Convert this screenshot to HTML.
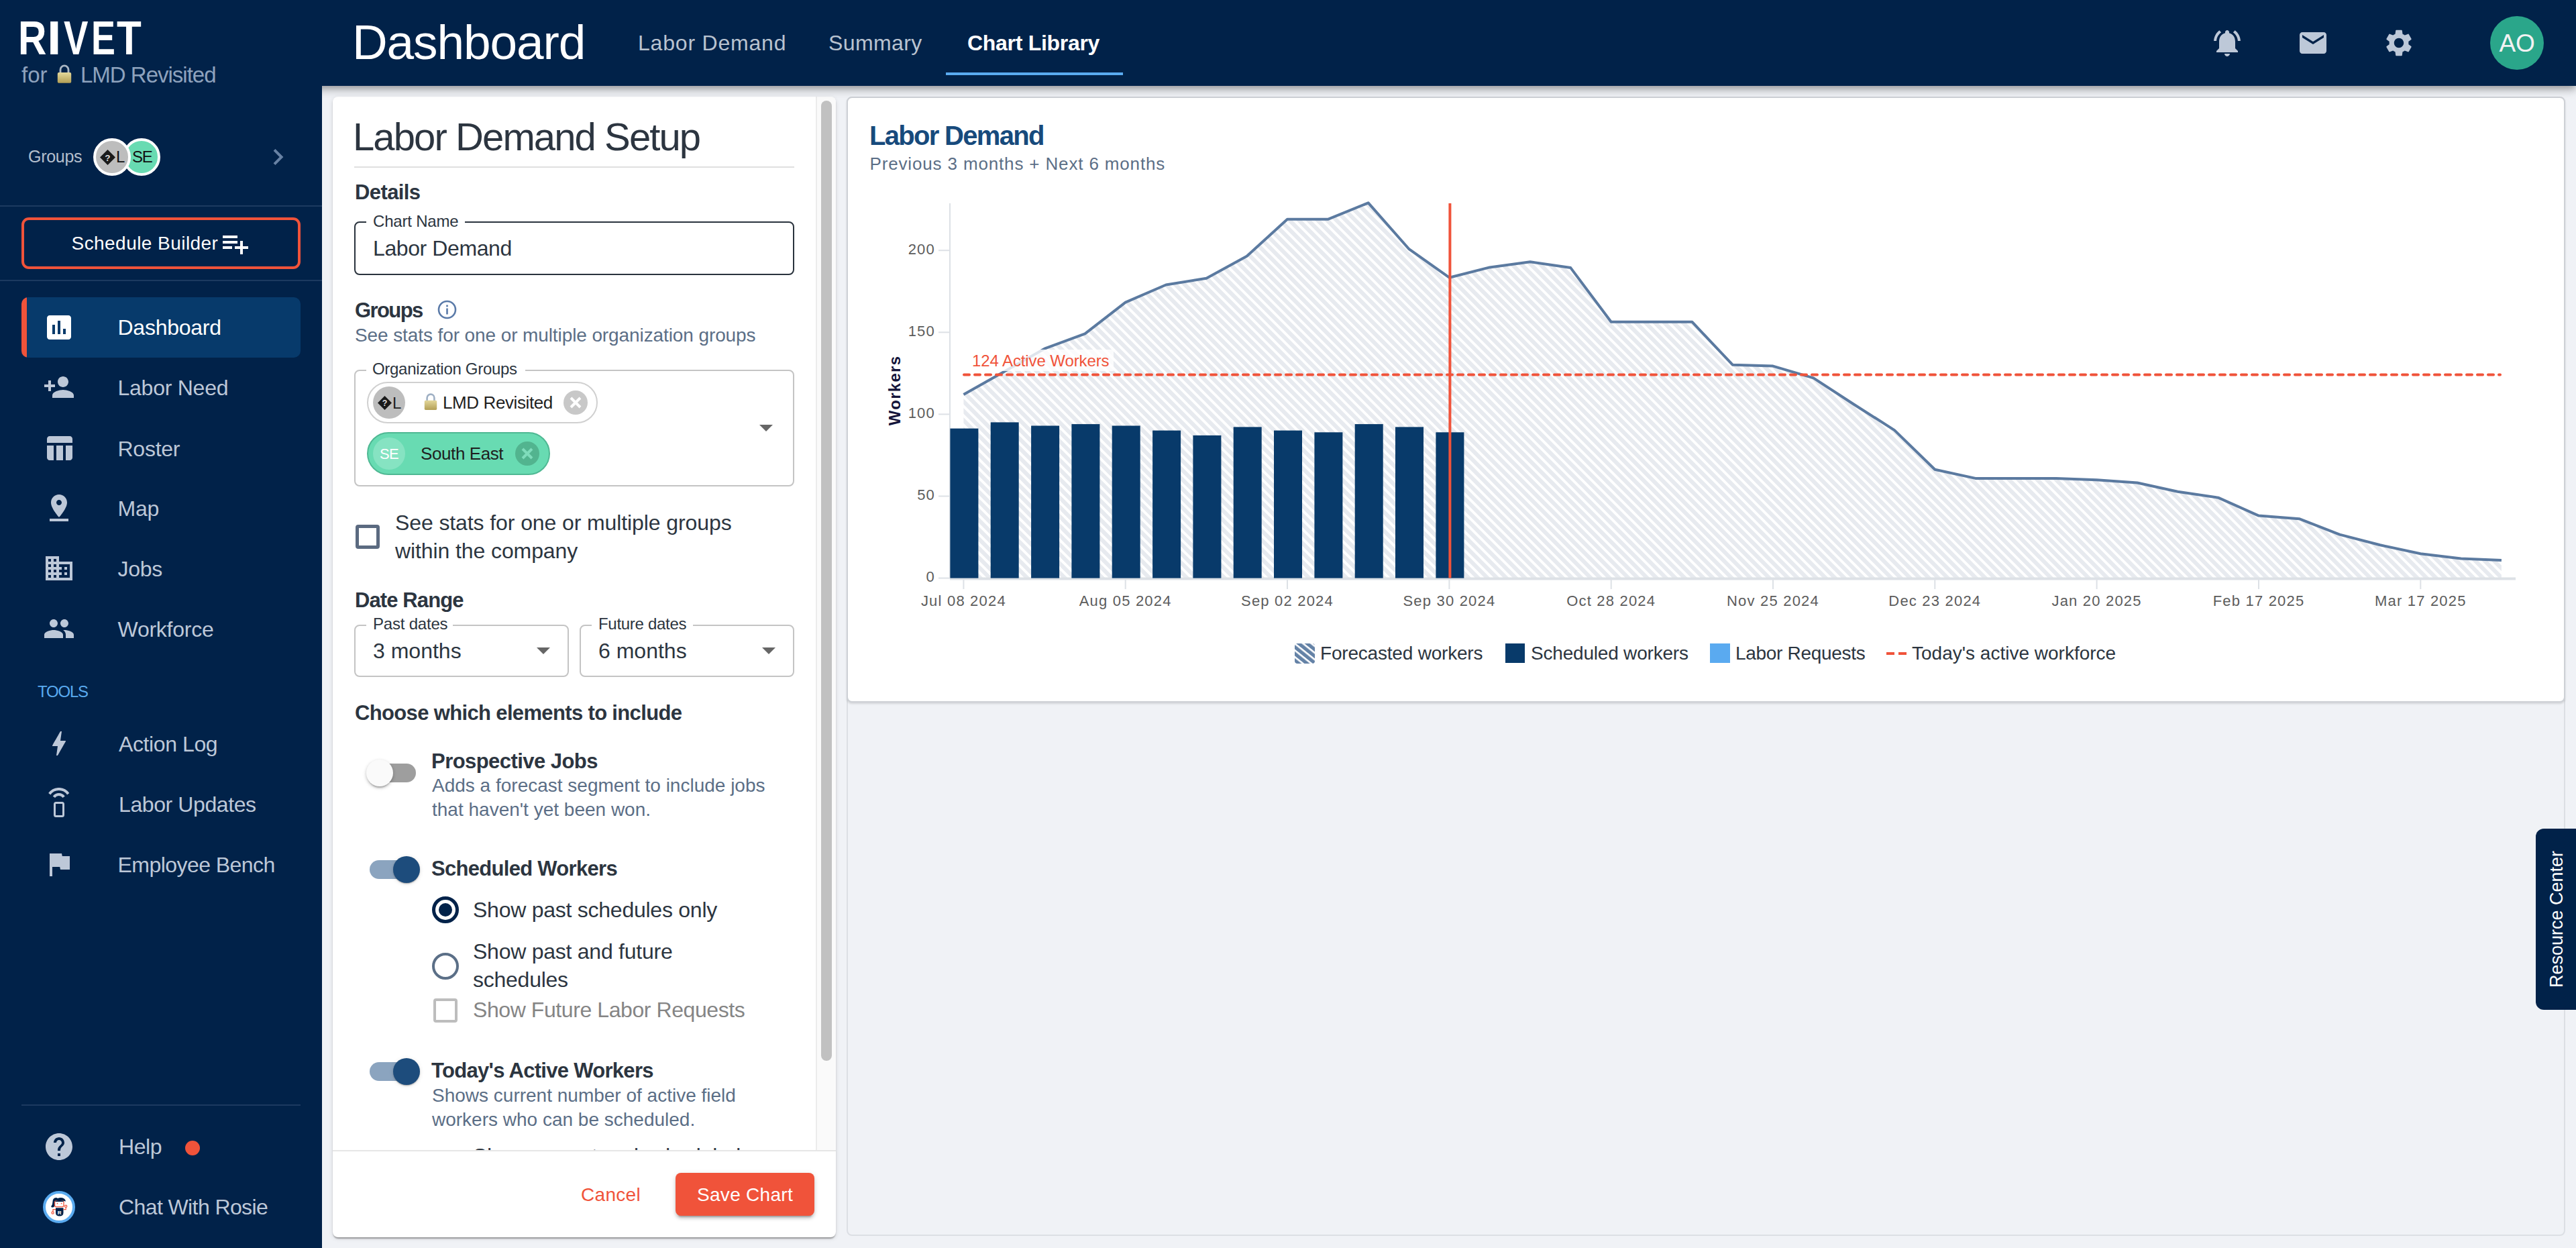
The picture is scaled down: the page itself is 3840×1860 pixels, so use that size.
<!DOCTYPE html>
<html><head><meta charset="utf-8"><title>Dashboard</title>
<style>
html,body{margin:0;padding:0;width:3840px;height:1860px;overflow:hidden;background:#f0f2f6;font-family:"Liberation Sans",sans-serif;}
.t{position:absolute;white-space:nowrap;line-height:1;}
svg{display:block}
</style></head><body>
<div style="position:relative;width:3840px;height:1860px;overflow:hidden">
<div style="position:absolute;left:0;top:0;width:480px;height:1860px;z-index:10">
<div style="position:absolute;left:0.0px;top:0.0px;width:480.0px;height:1860.0px;background:#012249"></div>
<div class="t rv" style="left:27.0px;top:21.7px;font-size:70px;color:#ffffff;font-weight:700;transform-origin:0 0;transform:scaleX(0.84);">R</div>
<div class="t rv" style="left:69.5px;top:21.7px;font-size:70px;color:#ffffff;font-weight:700;transform-origin:0 0;transform:scaleX(1.1);">I</div>
<div class="t rv" style="left:94.5px;top:21.7px;font-size:70px;color:#ffffff;font-weight:700;transform-origin:0 0;transform:scaleX(0.78);">V</div>
<div class="t rv" style="left:136.0px;top:21.7px;font-size:70px;color:#ffffff;font-weight:700;transform-origin:0 0;transform:scaleX(0.77);">E</div>
<div class="t rv" style="left:174.0px;top:21.7px;font-size:70px;color:#ffffff;font-weight:700;transform-origin:0 0;transform:scaleX(0.86);">T</div>
<div class="t" style="left:32.0px;top:95.1px;font-size:33px;color:#8ea2bd;">for</div>
<svg width="24" height="29" viewBox="0 0 20 24" style="position:absolute;left:84px;top:96px"><defs><linearGradient id="lg0" x1="0" y1="0" x2="0" y2="1"><stop offset="0" stop-color="#e3d79a"/><stop offset="1" stop-color="#b39f55"/></linearGradient></defs><path d="M5 11V6.5a5 5 0 0 1 10 0V11" fill="none" stroke="#aab6c4" stroke-width="2.4"/><rect x="1.5" y="10" width="17" height="13" rx="1.5" fill="url(#lg0)"/></svg><div class="t" style="left:120.0px;top:95.1px;font-size:33px;color:#8ea2bd;letter-spacing:-1.0px;">LMD Revisited</div>
<div class="t" style="left:42.0px;top:220.8px;font-size:25px;color:#b4bfcd;letter-spacing:-0.3px;">Groups</div>
<div style="position:absolute;left:183.0px;top:206.0px;width:56.0px;height:56.0px;border-radius:50%;background:#68dbb2;border:4px solid #fff;box-sizing:border-box"></div>
<div style="position:absolute;left:139.0px;top:206.0px;width:56.0px;height:56.0px;border-radius:50%;background:#bdbdbd;border:4px solid #fff;box-sizing:border-box"></div>
<svg style="position:absolute;left:149px;top:223px" width="23" height="23" viewBox="0 0 22 22"><path d="M11 0L22 11L11 22L0 11Z" fill="#1a1a1a"/><text x="11" y="16" font-size="13" font-weight="700" fill="#ddd" text-anchor="middle" font-family="Liberation Sans">?</text></svg>
<div class="t" style="left:173.0px;top:221.7px;font-size:24px;color:#111;">L</div>
<div class="t" style="left:197.0px;top:221.7px;font-size:24px;color:#111;letter-spacing:-1.2px;z-index:2">SE</div>
<svg style="position:absolute;left:400px;top:218px" width="30" height="32" viewBox="0 0 30 32"><path d="M9 5.3L19.6 16L9 26.7" fill="none" stroke="#6882a4" stroke-width="4"/></svg>
<div style="position:absolute;left:0.0px;top:306.0px;width:480.0px;height:2.0px;background:#1c3a60"></div>
<div style="position:absolute;left:32.0px;top:324.0px;width:416.0px;height:77.0px;border:4px solid #f0533a;border-radius:11px;box-sizing:border-box"></div>
<div class="t" style="left:106.5px;top:349.3px;font-size:28px;color:#ffffff;letter-spacing:0.45px;">Schedule Builder</div>
<svg style="position:absolute;left:331px;top:349px" width="40" height="32" viewBox="0 0 40 32"><rect x="1" y="2" width="22" height="4" fill="#fff"/><rect x="1" y="10" width="22" height="4" fill="#fff"/><rect x="1" y="18" width="14" height="4" fill="#fff"/><rect x="27" y="10" width="4" height="20" fill="#fff"/><rect x="19" y="18" width="20" height="4" fill="#fff"/></svg>
<div style="position:absolute;left:0.0px;top:417.0px;width:480.0px;height:2.0px;background:#1c3a60"></div>
<div style="position:absolute;left:32.0px;top:443.0px;width:416.0px;height:90.0px;background:#073a6b;border-radius:10px;overflow:hidden"><div style="position:absolute;left:0;top:0;width:8px;height:100%;background:#f0533a"></div></div>
<svg style="position:absolute;left:64.0px;top:464.0px" width="48" height="48" viewBox="0 0 24 24"><path fill="#ffffff" d="M19 3H5c-1.1 0-2 .9-2 2v14c0 1.1.9 2 2 2h14c1.1 0 2-.9 2-2V5c0-1.1-.9-2-2-2zM9 17H7v-7h2v7zm4 0h-2V7h2v10zm4 0h-2v-4h2v4z"/></svg>
<div class="t" style="left:175.5px;top:471.9px;font-size:32px;color:#ffffff;letter-spacing:-0.25px;">Dashboard</div>
<svg style="position:absolute;left:64.0px;top:553.0px" width="48" height="48" viewBox="0 0 24 24"><path fill="#bdc8d8" d="M15 12c2.21 0 4-1.79 4-4s-1.79-4-4-4-4 1.79-4 4 1.79 4 4 4zm-9-2V7H4v3H1v2h3v3h2v-3h3v-2H6zm9 4c-2.67 0-8 1.34-8 4v2h16v-2c0-2.66-5.33-4-8-4z"/></svg>
<div class="t" style="left:175.5px;top:561.9px;font-size:32px;color:#bdc8d8;letter-spacing:-0.25px;">Labor Need</div>
<svg style="position:absolute;left:64.0px;top:644.0px" width="48" height="48" viewBox="0 0 24 24"><path fill="#bdc8d8" d="M10 10.02h5V21h-5zM17 21h3c1.1 0 2-.9 2-2v-9h-5v11zm3-18H5c-1.1 0-2 .9-2 2v3h19V5c0-1.1-.9-2-2-2zM3 19c0 1.1.9 2 2 2h3V10H3v9z"/></svg>
<div class="t" style="left:175.5px;top:652.9px;font-size:32px;color:#bdc8d8;letter-spacing:-0.25px;">Roster</div>
<svg style="position:absolute;left:64.0px;top:733.0px" width="48" height="48" viewBox="0 0 24 24"><path fill="#bdc8d8" d="M18 8c0-3.31-2.69-6-6-6S6 4.69 6 8c0 4.5 6 11 6 11s6-6.5 6-11zm-8 0c0-1.1.9-2 2-2s2 .9 2 2-.89 2-2 2c-1.1 0-2-.9-2-2zM5 20v2h14v-2H5z"/></svg>
<div class="t" style="left:175.5px;top:741.9px;font-size:32px;color:#bdc8d8;letter-spacing:-0.25px;">Map</div>
<svg style="position:absolute;left:64.0px;top:823.0px" width="48" height="48" viewBox="0 0 24 24"><path fill="#bdc8d8" d="M12 7V3H2v18h20V7H12zM6 19H4v-2h2v2zm0-4H4v-2h2v2zm0-4H4V9h2v2zm0-4H4V5h2v2zm4 12H8v-2h2v2zm0-4H8v-2h2v2zm0-4H8V9h2v2zm0-4H8V5h2v2zm10 12h-8v-2h2v-2h-2v-2h2v-2h-2V9h8v10zm-2-8h-2v2h2v-2zm0 4h-2v2h2v-2z"/></svg>
<div class="t" style="left:175.5px;top:831.9px;font-size:32px;color:#bdc8d8;letter-spacing:-0.25px;">Jobs</div>
<svg style="position:absolute;left:64.0px;top:913.0px" width="48" height="48" viewBox="0 0 24 24"><path fill="#bdc8d8" d="M16 11c1.66 0 2.99-1.34 2.99-3S17.66 5 16 5c-1.66 0-3 1.34-3 3s1.34 3 3 3zm-8 0c1.66 0 2.99-1.34 2.99-3S9.66 5 8 5C6.34 5 5 6.34 5 8s1.34 3 3 3zm0 2c-2.33 0-7 1.17-7 3.5V19h14v-2.5c0-2.33-4.67-3.5-7-3.5zm8 0c-.29 0-.62.02-.97.05 1.16.84 1.97 1.97 1.97 3.45V19h6v-2.5c0-2.33-4.67-3.5-7-3.5z"/></svg>
<div class="t" style="left:175.5px;top:921.9px;font-size:32px;color:#bdc8d8;letter-spacing:-0.25px;">Workforce</div>
<div class="t" style="left:56.0px;top:1019.2px;font-size:24px;color:#5aabf0;letter-spacing:-1.2px;">TOOLS</div>
<svg style="position:absolute;left:64.0px;top:1084.0px" width="48" height="48" viewBox="0 0 24 24"><path fill="#bdc8d8" d="M11 21h-1l1-7H7.5c-.58 0-.57-.32-.38-.66.19-.34.05-.08.07-.12C8.48 10.94 10.42 7.54 13 3h1l-1 7h3.5c.49 0 .56.33.47.51l-.07.15C12.96 17.55 11 21 11 21z"/></svg>
<div class="t" style="left:177.0px;top:1092.9px;font-size:32px;color:#bdc8d8;letter-spacing:-0.4px;">Action Log</div>
<svg style="position:absolute;left:70px;top:1174px" width="36" height="46" viewBox="0 0 36 46"><path d="M3.8 9.25 A17 17 0 0 1 31.7 9.25" fill="none" stroke="#bdc8d8" stroke-width="4"/><path d="M10.4 13.8 A9 9 0 0 1 25.1 13.8" fill="none" stroke="#bdc8d8" stroke-width="4"/><rect x="11.5" y="22.5" width="13" height="20" rx="2" fill="none" stroke="#bdc8d8" stroke-width="3"/></svg>
<div class="t" style="left:177.0px;top:1182.9px;font-size:32px;color:#bdc8d8;letter-spacing:-0.4px;">Labor Updates</div>
<svg style="position:absolute;left:64.0px;top:1264.0px" width="48" height="48" viewBox="0 0 24 24"><path fill="#bdc8d8" d="M14.4 6L14 4H5v17h2v-7h5.6l.4 2h7V6z"/></svg>
<div class="t" style="left:175.5px;top:1272.9px;font-size:32px;color:#bdc8d8;letter-spacing:-0.55px;">Employee Bench</div>
<div style="position:absolute;left:32.0px;top:1646.0px;width:416.0px;height:2.0px;background:#1c3a60"></div>
<svg style="position:absolute;left:64.0px;top:1685.0px" width="48" height="48" viewBox="0 0 24 24"><path fill="#bdc8d8" d="M12 2C6.48 2 2 6.48 2 12s4.48 10 10 10 10-4.48 10-10S17.52 2 12 2zm1 17h-2v-2h2v2zm2.07-7.75l-.9.92C13.45 12.9 13 13.5 13 15h-2v-.5c0-1.1.45-2.1 1.17-2.83l1.24-1.26c.37-.36.59-.86.59-1.41 0-1.1-.9-2-2-2s-2 .9-2 2H8c0-2.21 1.79-4 4-4s4 1.79 4 4c0 .88-.36 1.68-.93 2.25z"/></svg>
<div class="t" style="left:177.0px;top:1692.9px;font-size:32px;color:#bdc8d8;letter-spacing:-0.4px;">Help</div>
<div style="position:absolute;left:276.0px;top:1700.0px;width:22.0px;height:22.0px;border-radius:50%;background:#f0533a"></div>
<div style="position:absolute;left:64.0px;top:1775.0px;width:48.0px;height:48.0px;border-radius:50%;background:#fff;border:4px solid #5aabf0;box-sizing:border-box"></div>
<svg style="position:absolute;left:74px;top:1784px" width="28" height="30" viewBox="0 0 28 30"><path d="M3.5 15.5 Q1.5 15 2.5 13.5 Q4.5 11 4.5 7 Q4.5 1.5 9.5 1 Q11 1 12 2 Q15 0.5 19 1.2 Q23 2 24 6.5 L20.5 5.8 Q14 4.2 8.5 6 Q8 10 7.5 13 Q6.5 16 3.5 15.5Z" fill="#012249"/><rect x="7.6" y="5.8" width="13.4" height="8.8" rx="2" fill="#fff" stroke="#f0533a" stroke-width="1.3"/><path d="M8.5 6 Q14 4.2 20.5 5.8 L20.5 7 L8.5 7Z" fill="#012249"/><circle cx="11.5" cy="9.6" r="0.9" fill="#f0533a"/><circle cx="17.6" cy="9.6" r="0.9" fill="#f0533a"/><path d="M9 16.3 h11.5 v7 q0 5.2 -5.75 5.2 q-5.75 0 -5.75 -5.2 z" fill="#012249"/><text x="14.75" y="26" font-size="8" font-weight="700" fill="#fff" text-anchor="middle" font-family="Liberation Sans">R</text><path d="M9 18.6 H5 V21.8" fill="none" stroke="#f0533a" stroke-width="1.2"/><circle cx="4.6" cy="23.5" r="1.6" fill="#fff" stroke="#f0533a" stroke-width="1.2"/><path d="M20.5 18.6 H24.2 V15.5" fill="none" stroke="#f0533a" stroke-width="1.2"/><circle cx="24.2" cy="13.8" r="1.6" fill="#fff" stroke="#f0533a" stroke-width="1.2"/></svg>
<div class="t" style="left:177.0px;top:1782.9px;font-size:32px;color:#bdc8d8;letter-spacing:-0.6px;">Chat With Rosie</div>
</div>
<div style="position:absolute;left:496.0px;top:144.0px;width:750.0px;height:1700.0px;background:#fff;border-radius:8px;box-shadow:0 4px 2px -2px rgba(0,0,0,.2),0 2px 2px 0 rgba(0,0,0,.14),0 2px 6px 0 rgba(0,0,0,.12)"></div>
<div style="position:absolute;left:496.0px;top:144.0px;width:720.0px;height:1571.0px;overflow:hidden"><div style="position:absolute;left:-496px;top:-144px;width:1px;height:1px"><div class="t" style="left:526.0px;top:175.2px;font-size:58px;color:#2c3540;letter-spacing:-1.9px;">Labor Demand Setup</div>
<div style="position:absolute;left:528.0px;top:248.0px;width:656.0px;height:2.0px;background:#e0e0e0"></div>
<div class="t" style="left:529.0px;top:270.5px;font-size:31px;color:#2c3540;font-weight:700;letter-spacing:-0.6px;">Details</div>
<div style="position:absolute;left:528.0px;top:330.0px;width:656.0px;height:80.0px;border:2px solid #2a333d;border-radius:8px;box-sizing:border-box"></div>
<div style="position:absolute;left:546.0px;top:328.0px;width:147.0px;height:6.0px;background:#fff"></div>
<div class="t" style="left:556.0px;top:317.7px;font-size:24px;color:#2c3540;letter-spacing:-0.2px;">Chart Name</div>
<div class="t" style="left:556.0px;top:353.9px;font-size:32px;color:#2c3540;letter-spacing:-0.4px;">Labor Demand</div>
<div class="t" style="left:529.0px;top:446.5px;font-size:31px;color:#2c3540;font-weight:700;letter-spacing:-1.6px;">Groups</div>
<svg style="position:absolute;left:652px;top:447px" width="29" height="29" viewBox="0 0 29 29"><circle cx="14.5" cy="14.5" r="12.5" fill="none" stroke="#5a7aa8" stroke-width="2.6"/><rect x="13.2" y="12.5" width="2.6" height="9" fill="#5a7aa8"/><rect x="13.2" y="7.5" width="2.6" height="2.8" fill="#5a7aa8"/></svg>
<div class="t" style="left:529.0px;top:485.7px;font-size:28px;color:#5b6e86;letter-spacing:-0.1px;">See stats for one or multiple organization groups</div>
<div style="position:absolute;left:528.0px;top:551.0px;width:656.0px;height:174.0px;border:2px solid #c4c4c4;border-radius:8px;box-sizing:border-box"></div>
<div style="position:absolute;left:546.0px;top:549.0px;width:237.0px;height:6.0px;background:#fff"></div>
<div class="t" style="left:555.0px;top:537.7px;font-size:24px;color:#2c3540;letter-spacing:-0.3px;">Organization Groups</div>
<div style="position:absolute;left:547.0px;top:569.0px;width:344.0px;height:62.0px;border:2px solid #d0d0d0;border-radius:31px;box-sizing:border-box;background:#fff"></div>
<div style="position:absolute;left:556.0px;top:576.0px;width:48.0px;height:48.0px;border-radius:50%;background:#bdbdbd"></div>
<svg style="position:absolute;left:563px;top:590px" width="21" height="21" viewBox="0 0 22 22"><path d="M11 0L22 11L11 22L0 11Z" fill="#1a1a1a"/><text x="11" y="16" font-size="13" font-weight="700" fill="#ddd" text-anchor="middle" font-family="Liberation Sans">?</text></svg>
<div class="t" style="left:585.0px;top:588.7px;font-size:24px;color:#222;">L</div>
<svg width="22" height="26" viewBox="0 0 20 24" style="position:absolute;left:631px;top:586px"><defs><linearGradient id="lg1" x1="0" y1="0" x2="0" y2="1"><stop offset="0" stop-color="#e3d79a"/><stop offset="1" stop-color="#b39f55"/></linearGradient></defs><path d="M5 11V6.5a5 5 0 0 1 10 0V11" fill="none" stroke="#9fb0c4" stroke-width="2.4"/><rect x="1.5" y="10" width="17" height="13" rx="1.5" fill="url(#lg1)"/></svg>
<div class="t" style="left:660.0px;top:586.7px;font-size:26px;color:#1f1f1f;letter-spacing:-0.4px;">LMD Revisited</div>
<svg style="position:absolute;left:840px;top:582px" width="36" height="36" viewBox="0 0 36 36"><circle cx="18" cy="18" r="18" fill="#c8c8c8"/><path d="M11 11L25 25M25 11L11 25" stroke="#ffffff" stroke-width="4"/></svg>
<div style="position:absolute;left:547.0px;top:644.0px;width:273.0px;height:64.0px;border:2px solid #4fb893;border-radius:32px;box-sizing:border-box;background:#68dbb2"></div>
<div style="position:absolute;left:556.0px;top:652.0px;width:48.0px;height:48.0px;border-radius:50%;background:#86e3c2"></div>
<div class="t" style="left:580.0px;top:665.9px;font-size:22px;color:#ffffff;letter-spacing:-0.6px;transform:translateX(-50%);">SE</div>
<div class="t" style="left:627.0px;top:663.4px;font-size:26px;color:#1f1f1f;letter-spacing:-0.4px;">South East</div>
<svg style="position:absolute;left:768px;top:658px" width="36" height="36" viewBox="0 0 36 36"><circle cx="18" cy="18" r="18" fill="#52b48f"/><path d="M11 11L25 25M25 11L11 25" stroke="#7fdcbb" stroke-width="4"/></svg>
<svg style="position:absolute;left:1132px;top:633px" width="20" height="10" viewBox="0 0 20 10"><path d="M0 0h20L10 10z" fill="#666"/></svg>
<div style="position:absolute;left:530.0px;top:782.0px;width:36.0px;height:36.0px;border:5px solid #5b6a80;border-radius:4px;box-sizing:border-box"></div>
<div class="t" style="left:589.0px;top:763.4px;font-size:32px;color:#2c3540;letter-spacing:-0.1px;">See stats for one or multiple groups</div>
<div class="t" style="left:589.0px;top:804.9px;font-size:32px;color:#2c3540;letter-spacing:-0.1px;">within the company</div>
<div class="t" style="left:529.0px;top:878.8px;font-size:31px;color:#2c3540;font-weight:700;letter-spacing:-0.9px;">Date Range</div>
<div style="position:absolute;left:528.0px;top:931.0px;width:320.0px;height:78.0px;border:2px solid #c4c4c4;border-radius:8px;box-sizing:border-box"></div>
<div style="position:absolute;left:546.0px;top:929.0px;width:129.0px;height:6.0px;background:#fff"></div>
<div style="position:absolute;left:864.0px;top:931.0px;width:320.0px;height:78.0px;border:2px solid #c4c4c4;border-radius:8px;box-sizing:border-box"></div>
<div style="position:absolute;left:882.0px;top:929.0px;width:151.0px;height:6.0px;background:#fff"></div>
<div class="t" style="left:556.0px;top:917.7px;font-size:24px;color:#2c3540;letter-spacing:-0.2px;">Past dates</div>
<div class="t" style="left:892.0px;top:917.7px;font-size:24px;color:#2c3540;letter-spacing:-0.3px;">Future dates</div>
<div class="t" style="left:556.0px;top:953.6px;font-size:32px;color:#2c3540;">3 months</div>
<div class="t" style="left:892.0px;top:953.6px;font-size:32px;color:#2c3540;">6 months</div>
<svg style="position:absolute;left:800px;top:965px" width="20" height="10" viewBox="0 0 20 10"><path d="M0 0h20L10 10z" fill="#666"/></svg>
<svg style="position:absolute;left:1136px;top:965px" width="20" height="10" viewBox="0 0 20 10"><path d="M0 0h20L10 10z" fill="#666"/></svg>
<div class="t" style="left:529.0px;top:1046.8px;font-size:31px;color:#2c3540;font-weight:700;letter-spacing:-0.65px;">Choose which elements to include</div>
<div style="position:absolute;left:551.0px;top:1138.0px;width:69.0px;height:28.0px;background:#9e9e9e;border-radius:14px"></div>
<div style="position:absolute;left:546.0px;top:1132.0px;width:40.0px;height:40.0px;background:#fafafa;border-radius:50%;box-shadow:0 4px 2px -2px rgba(0,0,0,.2),0 2px 4px rgba(0,0,0,.14),0 2px 6px rgba(0,0,0,.12)"></div>
<div class="t" style="left:643.0px;top:1118.8px;font-size:31px;color:#2c3540;font-weight:700;letter-spacing:-0.55px;">Prospective Jobs</div>
<div class="t" style="left:644.0px;top:1157.3px;font-size:28px;color:#5b6e86;">Adds a forecast segment to include jobs</div>
<div class="t" style="left:644.0px;top:1193.3px;font-size:28px;color:#5b6e86;">that haven't yet been won.</div>
<div style="position:absolute;left:551.0px;top:1282.0px;width:69.0px;height:28.0px;background:#8ba4bf;border-radius:14px"></div>
<div style="position:absolute;left:586.0px;top:1276.0px;width:40.0px;height:40.0px;background:#1d4c7c;border-radius:50%;box-shadow:0 2px 2px -1px rgba(0,0,0,.2),0 1px 2px rgba(0,0,0,.14),0 1px 6px rgba(0,0,0,.12)"></div>
<div class="t" style="left:643.0px;top:1278.8px;font-size:31px;color:#2c3540;font-weight:700;letter-spacing:-0.7px;">Scheduled Workers</div>
<div style="position:absolute;left:644.0px;top:1336.0px;width:40.0px;height:40.0px;border:5px solid #012249;border-radius:50%;box-sizing:border-box"><div style="position:absolute;left:5px;top:5px;width:20px;height:20px;border-radius:50%;background:#012249"></div></div>
<div class="t" style="left:705.0px;top:1339.9px;font-size:32px;color:#2c3540;letter-spacing:-0.25px;">Show past schedules only</div>
<div style="position:absolute;left:644.0px;top:1420.0px;width:40.0px;height:40.0px;border:4px solid #5b6f87;border-radius:50%;box-sizing:border-box"></div>
<div class="t" style="left:705.0px;top:1401.9px;font-size:32px;color:#2c3540;letter-spacing:-0.25px;">Show past and future</div>
<div class="t" style="left:705.0px;top:1443.7px;font-size:32px;color:#2c3540;letter-spacing:-0.25px;">schedules</div>
<div style="position:absolute;left:646.0px;top:1488.0px;width:36.0px;height:36.0px;border:4px solid #bdbdbd;border-radius:4px;box-sizing:border-box"></div>
<div class="t" style="left:705.0px;top:1488.9px;font-size:32px;color:#858585;letter-spacing:-0.42px;">Show Future Labor Requests</div>
<div style="position:absolute;left:551.0px;top:1582.5px;width:69.0px;height:28.0px;background:#8ba4bf;border-radius:14px"></div>
<div style="position:absolute;left:586.0px;top:1576.5px;width:40.0px;height:40.0px;background:#1d4c7c;border-radius:50%;box-shadow:0 2px 2px -1px rgba(0,0,0,.2),0 1px 2px rgba(0,0,0,.14),0 1px 6px rgba(0,0,0,.12)"></div>
<div class="t" style="left:643.0px;top:1579.8px;font-size:31px;color:#2c3540;font-weight:700;letter-spacing:-0.7px;">Today's Active Workers</div>
<div class="t" style="left:644.0px;top:1618.8px;font-size:28px;color:#5b6e86;">Shows current number of active field</div>
<div class="t" style="left:644.0px;top:1654.6px;font-size:28px;color:#5b6e86;">workers who can be scheduled.</div>
<div style="position:absolute;left:644.0px;top:1718.0px;width:40.0px;height:40.0px;border:4px solid #5b6f87;border-radius:50%;box-sizing:border-box"></div>
<div class="t" style="left:705.0px;top:1706.9px;font-size:32px;color:#2c3540;letter-spacing:-0.25px;">Show current and scheduled</div>
</div></div>
<div style="position:absolute;left:1216.0px;top:144.0px;width:30.0px;height:1571.0px;background:#fafafa;border-left:2px solid #ececec;box-sizing:border-box;border-top-right-radius:8px"></div>
<div style="position:absolute;left:1224.0px;top:150.0px;width:16.0px;height:1431.0px;background:#c1c1c1;border-radius:8px"></div>
<div style="position:absolute;left:496.0px;top:1714.0px;width:750.0px;height:2.0px;background:#e6e6e6"></div>
<div class="t" style="left:866.0px;top:1767.0px;font-size:28px;color:#f0533a;letter-spacing:0.3px;">Cancel</div>
<div style="position:absolute;left:1007.0px;top:1748.0px;width:207.0px;height:64.0px;background:#f0533a;border-radius:8px;box-shadow:0 6px 2px -4px rgba(0,0,0,.2),0 4px 4px 0 rgba(0,0,0,.14),0 2px 10px 0 rgba(0,0,0,.12)"></div>
<div class="t" style="left:1039.0px;top:1767.0px;font-size:28px;color:#ffffff;letter-spacing:0.3px;">Save Chart</div>
<div style="position:absolute;left:1262.0px;top:144.0px;width:2562.0px;height:1698.0px;border:2px solid #dcdfe4;border-radius:8px;box-sizing:border-box"></div>
<div style="position:absolute;left:1262.0px;top:144.0px;width:2562.0px;height:903.0px;background:#fff;border:2px solid #ced1d6;border-radius:8px;box-sizing:border-box;box-shadow:0 2px 3px rgba(0,0,0,.12)"></div>
<div class="t" style="left:1296.0px;top:181.6px;font-size:40px;color:#174a7c;font-weight:700;letter-spacing:-1.7px;">Labor Demand</div>
<div class="t" style="left:1296.5px;top:230.8px;font-size:26px;color:#5b6e86;letter-spacing:0.85px;">Previous 3 months + Next 6 months</div>
<svg style="position:absolute;left:0;top:0" width="3840" height="1100" viewBox="0 0 3840 1100"><defs><pattern id="hatch" patternUnits="userSpaceOnUse" width="14" height="14" x="-2"><path d="M-7 -7L21 21M-7 7L7 21M7 -7L21 7" stroke="#e7eaef" stroke-width="6"/></pattern><pattern id="hatch2" patternUnits="userSpaceOnUse" width="10" height="10"><rect width="10" height="10" fill="#fff"/><path d="M-5 -5L15 15M-5 5L5 15M5 -5L15 5" stroke="#6482a6" stroke-width="4"/></pattern></defs><line x1="1416" y1="303" x2="1416" y2="861.6" stroke="#dde1e6" stroke-width="2"/><line x1="1399" y1="861.6" x2="1416" y2="861.6" stroke="#dde1e6" stroke-width="2"/><line x1="1399" y1="739.5" x2="1416" y2="739.5" stroke="#dde1e6" stroke-width="2"/><line x1="1399" y1="617.4" x2="1416" y2="617.4" stroke="#dde1e6" stroke-width="2"/><line x1="1399" y1="495.3" x2="1416" y2="495.3" stroke="#dde1e6" stroke-width="2"/><line x1="1399" y1="373.2" x2="1416" y2="373.2" stroke="#dde1e6" stroke-width="2"/><polygon points="1436.4,861.6 1436.4,587.9 1496.7,553.9 1557.1,519.7 1617.4,497.3 1677.7,450.6 1738.1,424.5 1798.4,414.7 1858.7,381.7 1919.0,326.8 1979.4,326.8 2039.7,302.4 2100.0,370.8 2160.4,413.7 2220.7,398.4 2281.0,390.3 2341.3,399.1 2401.7,479.7 2462.0,479.7 2522.3,479.7 2582.7,543.7 2643.0,545.6 2703.3,563.4 2763.7,602.7 2824.0,641.1 2884.3,699.7 2944.7,712.9 3005.0,712.9 3065.3,712.9 3125.6,715.3 3186.0,719.5 3246.3,732.7 3306.6,741.7 3367.0,768.6 3427.3,773.2 3487.6,796.6 3547.9,812.3 3608.3,825.2 3668.6,832.5 3728.9,835.0 3728.9,861.6" fill="url(#hatch)"/><line x1="1416" y1="862.6" x2="3750" y2="862.6" stroke="#dde1e6" stroke-width="4"/><line x1="1436.4" y1="861.6" x2="1436.4" y2="878" stroke="#dde1e6" stroke-width="2"/><line x1="1677.7" y1="861.6" x2="1677.7" y2="878" stroke="#dde1e6" stroke-width="2"/><line x1="1919.0" y1="861.6" x2="1919.0" y2="878" stroke="#dde1e6" stroke-width="2"/><line x1="2160.4" y1="861.6" x2="2160.4" y2="878" stroke="#dde1e6" stroke-width="2"/><line x1="2401.7" y1="861.6" x2="2401.7" y2="878" stroke="#dde1e6" stroke-width="2"/><line x1="2643.0" y1="861.6" x2="2643.0" y2="878" stroke="#dde1e6" stroke-width="2"/><line x1="2884.3" y1="861.6" x2="2884.3" y2="878" stroke="#dde1e6" stroke-width="2"/><line x1="3125.6" y1="861.6" x2="3125.6" y2="878" stroke="#dde1e6" stroke-width="2"/><line x1="3367.0" y1="861.6" x2="3367.0" y2="878" stroke="#dde1e6" stroke-width="2"/><line x1="3608.3" y1="861.6" x2="3608.3" y2="878" stroke="#dde1e6" stroke-width="2"/><rect x="1416.4" y="638.6" width="42" height="223.0" fill="#083a6a"/><rect x="1476.7" y="629.4" width="42" height="232.2" fill="#083a6a"/><rect x="1537.1" y="634.5" width="42" height="227.1" fill="#083a6a"/><rect x="1597.4" y="632.1" width="42" height="229.5" fill="#083a6a"/><rect x="1657.7" y="634.5" width="42" height="227.1" fill="#083a6a"/><rect x="1718.1" y="641.6" width="42" height="220.0" fill="#083a6a"/><rect x="1778.4" y="648.9" width="42" height="212.7" fill="#083a6a"/><rect x="1838.7" y="636.4" width="42" height="225.2" fill="#083a6a"/><rect x="1899.0" y="641.6" width="42" height="220.0" fill="#083a6a"/><rect x="1959.4" y="644.3" width="42" height="217.3" fill="#083a6a"/><rect x="2019.7" y="632.1" width="42" height="229.5" fill="#083a6a"/><rect x="2080.0" y="636.4" width="42" height="225.2" fill="#083a6a"/><rect x="2140.4" y="644.3" width="42" height="217.3" fill="#083a6a"/><polyline points="1436.4,587.9 1496.7,553.9 1557.1,519.7 1617.4,497.3 1677.7,450.6 1738.1,424.5 1798.4,414.7 1858.7,381.7 1919.0,326.8 1979.4,326.8 2039.7,302.4 2100.0,370.8 2160.4,413.7 2220.7,398.4 2281.0,390.3 2341.3,399.1 2401.7,479.7 2462.0,479.7 2522.3,479.7 2582.7,543.7 2643.0,545.6 2703.3,563.4 2763.7,602.7 2824.0,641.1 2884.3,699.7 2944.7,712.9 3005.0,712.9 3065.3,712.9 3125.6,715.3 3186.0,719.5 3246.3,732.7 3306.6,741.7 3367.0,768.6 3427.3,773.2 3487.6,796.6 3547.9,812.3 3608.3,825.2 3668.6,832.5 3728.9,835.0" fill="none" stroke="#5b7aa0" stroke-width="4" stroke-linejoin="round"/><line x1="2161.4" y1="303" x2="2161.4" y2="861.6" stroke="#f0533a" stroke-width="4"/><line x1="1437" y1="558.6" x2="3727" y2="558.6" stroke="#f0533a" stroke-width="4" stroke-dasharray="8 8" stroke-linecap="round"/><rect x="1442" y="521" width="218" height="32" fill="#fff" fill-opacity="0.8"/></svg>
<div class="t" style="left:1449.0px;top:525.9px;font-size:24px;color:#f0533a;letter-spacing:-0.1px;">124 Active Workers</div>
<div class="t" style="left:1394.0px;top:849.0px;font-size:22px;color:#5c5c5c;letter-spacing:1.2px;transform:translateX(-100%);">0</div>
<div class="t" style="left:1394.0px;top:726.9px;font-size:22px;color:#5c5c5c;letter-spacing:1.2px;transform:translateX(-100%);">50</div>
<div class="t" style="left:1394.0px;top:604.8px;font-size:22px;color:#5c5c5c;letter-spacing:1.2px;transform:translateX(-100%);">100</div>
<div class="t" style="left:1394.0px;top:482.7px;font-size:22px;color:#5c5c5c;letter-spacing:1.2px;transform:translateX(-100%);">150</div>
<div class="t" style="left:1394.0px;top:360.6px;font-size:22px;color:#5c5c5c;letter-spacing:1.2px;transform:translateX(-100%);">200</div>
<div class="t" style="left:1333.5px;top:581.5px;font-size:24px;font-weight:700;color:#14143a;letter-spacing:1.3px;transform:translate(-50%,-50%) rotate(-90deg);line-height:1">Workers</div>
<div class="t" style="left:1436.4px;top:884.9px;font-size:22px;color:#5c5c5c;letter-spacing:1.2px;transform:translateX(-50%);">Jul 08 2024</div>
<div class="t" style="left:1677.7px;top:884.9px;font-size:22px;color:#5c5c5c;letter-spacing:1.2px;transform:translateX(-50%);">Aug 05 2024</div>
<div class="t" style="left:1919.0px;top:884.9px;font-size:22px;color:#5c5c5c;letter-spacing:1.2px;transform:translateX(-50%);">Sep 02 2024</div>
<div class="t" style="left:2160.4px;top:884.9px;font-size:22px;color:#5c5c5c;letter-spacing:1.2px;transform:translateX(-50%);">Sep 30 2024</div>
<div class="t" style="left:2401.7px;top:884.9px;font-size:22px;color:#5c5c5c;letter-spacing:1.2px;transform:translateX(-50%);">Oct 28 2024</div>
<div class="t" style="left:2643.0px;top:884.9px;font-size:22px;color:#5c5c5c;letter-spacing:1.2px;transform:translateX(-50%);">Nov 25 2024</div>
<div class="t" style="left:2884.3px;top:884.9px;font-size:22px;color:#5c5c5c;letter-spacing:1.2px;transform:translateX(-50%);">Dec 23 2024</div>
<div class="t" style="left:3125.6px;top:884.9px;font-size:22px;color:#5c5c5c;letter-spacing:1.2px;transform:translateX(-50%);">Jan 20 2025</div>
<div class="t" style="left:3367.0px;top:884.9px;font-size:22px;color:#5c5c5c;letter-spacing:1.2px;transform:translateX(-50%);">Feb 17 2025</div>
<div class="t" style="left:3608.3px;top:884.9px;font-size:22px;color:#5c5c5c;letter-spacing:1.2px;transform:translateX(-50%);">Mar 17 2025</div>
<svg style="position:absolute;left:1930px;top:959px" width="30" height="30" viewBox="0 0 30 30"><defs><pattern id="lh" patternUnits="userSpaceOnUse" width="7.8" height="60" patternTransform="translate(2,0) rotate(-51.3)"><rect width="5.2" height="60" fill="#6482a6"/></pattern><clipPath id="lc"><rect width="30" height="30" rx="4"/></clipPath></defs><rect width="30" height="30" fill="url(#lh)" clip-path="url(#lc)"/></svg>
<div class="t" style="left:1968.0px;top:959.5px;font-size:28px;color:#2c3540;letter-spacing:-0.2px;">Forecasted workers</div>
<div style="position:absolute;left:2244.0px;top:959.0px;width:29.0px;height:29.0px;background:#083a6a"></div>
<div class="t" style="left:2282.0px;top:959.5px;font-size:28px;color:#2c3540;letter-spacing:-0.2px;">Scheduled workers</div>
<div style="position:absolute;left:2549.0px;top:959.0px;width:30.0px;height:29.0px;background:#5aaaf0"></div>
<div class="t" style="left:2587.0px;top:959.5px;font-size:28px;color:#2c3540;letter-spacing:-0.3px;">Labor Requests</div>
<div style="position:absolute;left:2812.0px;top:972.0px;width:12.0px;height:4.0px;background:#f0533a"></div>
<div style="position:absolute;left:2830.0px;top:972.0px;width:12.0px;height:4.0px;background:#f0533a"></div>
<div class="t" style="left:2850.0px;top:959.5px;font-size:28px;color:#2c3540;">Today's active workforce</div>
<div style="position:absolute;left:3780.0px;top:1235.0px;width:60.0px;height:270.0px;background:#012249;border-radius:12px 0 0 12px;z-index:3"></div>
<div class="t" style="left:3811px;top:1370px;font-size:27px;color:#fff;line-height:1;z-index:4;transform:translate(-50%,-50%) rotate(-90deg)">Resource Center</div>
<div style="position:absolute;left:0.0px;top:0.0px;width:3840.0px;height:128.0px;background:#012249;box-shadow:0 4px 8px -2px rgba(0,0,0,.2),0 8px 10px 0 rgba(0,0,0,.14),0 2px 20px 0 rgba(0,0,0,.12);z-index:5"></div>
<div class="t" style="left:525.0px;top:25.7px;font-size:73px;color:#ffffff;letter-spacing:-1.1px;z-index:6">Dashboard</div>
<div class="t" style="left:951.0px;top:47.9px;font-size:32px;color:#b9c3d0;letter-spacing:0.8px;z-index:6">Labor Demand</div>
<div class="t" style="left:1235.0px;top:47.9px;font-size:32px;color:#b9c3d0;letter-spacing:0.4px;z-index:6">Summary</div>
<div class="t" style="left:1442.0px;top:47.9px;font-size:32px;color:#ffffff;font-weight:700;letter-spacing:-0.3px;z-index:6">Chart Library</div>
<div style="position:absolute;left:1410.0px;top:108.0px;width:264.0px;height:4.0px;background:#5aabf0;z-index:6"></div>
<svg style="z-index:6;position:absolute;left:3296.0px;top:40.0px" width="48" height="48" viewBox="0 0 24 24"><path fill="#bdc8d8" d="M7.58 4.08L6.15 2.65C3.75 4.48 2.17 7.3 2.03 10.5h2c.15-2.65 1.51-4.97 3.55-6.42zm12.39 6.42h2c-.15-3.2-1.73-6.02-4.12-7.85l-1.42 1.43c2.02 1.45 3.39 3.77 3.54 6.42zM18 11c0-3.07-1.64-5.64-4.5-6.32V4c0-.83-.67-1.5-1.5-1.5s-1.5.67-1.5 1.5v.68C7.63 5.36 6 7.92 6 11v5l-2 2v1h16v-1l-2-2v-5zm-6 11c.14 0 .27-.01.4-.04.65-.14 1.18-.58 1.44-1.18.1-.24.15-.5.15-.78h-4c.01 1.1.9 2 2.01 2z"/></svg>
<svg style="z-index:6;position:absolute;left:3424.0px;top:40.0px" width="48" height="48" viewBox="0 0 24 24"><path fill="#bdc8d8" d="M20 4H4c-1.1 0-1.99.9-1.99 2L2 18c0 1.1.9 2 2 2h16c1.1 0 2-.9 2-2V6c0-1.1-.9-2-2-2zm0 4l-8 5-8-5V6l8 5 8-5v2z"/></svg>
<svg style="z-index:6;position:absolute;left:3552.0px;top:40.0px" width="48" height="48" viewBox="0 0 24 24"><path fill="#bdc8d8" d="M19.14 12.94c.04-.3.06-.61.06-.94 0-.32-.02-.64-.07-.94l2.03-1.58c.18-.14.23-.41.12-.61l-1.92-3.32c-.12-.22-.37-.29-.59-.22l-2.39.96c-.5-.38-1.03-.7-1.62-.94l-.36-2.54c-.04-.24-.24-.41-.48-.41h-3.84c-.24 0-.43.17-.47.41l-.36 2.54c-.59.24-1.13.57-1.62.94l-2.39-.96c-.22-.08-.47 0-.59.22L2.74 8.87c-.12.21-.08.47.12.61l2.03 1.58c-.05.3-.09.63-.09.94s.02.64.07.94l-2.03 1.58c-.18.14-.23.41-.12.61l1.92 3.32c.12.22.37.29.59.22l2.39-.96c.5.38 1.03.7 1.62.94l.36 2.54c.05.24.24.41.48.41h3.84c.24 0 .44-.17.47-.41l.36-2.54c.59-.24 1.13-.56 1.62-.94l2.39.96c.22.08.47 0 .59-.22l1.92-3.32c.12-.22.07-.47-.12-.61l-2.01-1.58zM12 15.6c-1.98 0-3.6-1.62-3.6-3.6s1.62-3.6 3.6-3.6 3.6 1.62 3.6 3.6-1.62 3.6-3.6 3.6z"/></svg>
<div style="position:absolute;left:3712.0px;top:24.0px;width:80.0px;height:80.0px;border-radius:50%;background:#2aa68a;z-index:6"></div>
<div class="t" style="left:3752.0px;top:45.7px;font-size:37px;color:#f2f2f2;letter-spacing:-0.2px;transform:translateX(-50%);z-index:7">AO</div>
</div><script>(function(){var w=window.innerWidth;if(w&&Math.abs(w-3840)>2){var z=w/3840;document.documentElement.style.zoom=z;}})();</script></body></html>
